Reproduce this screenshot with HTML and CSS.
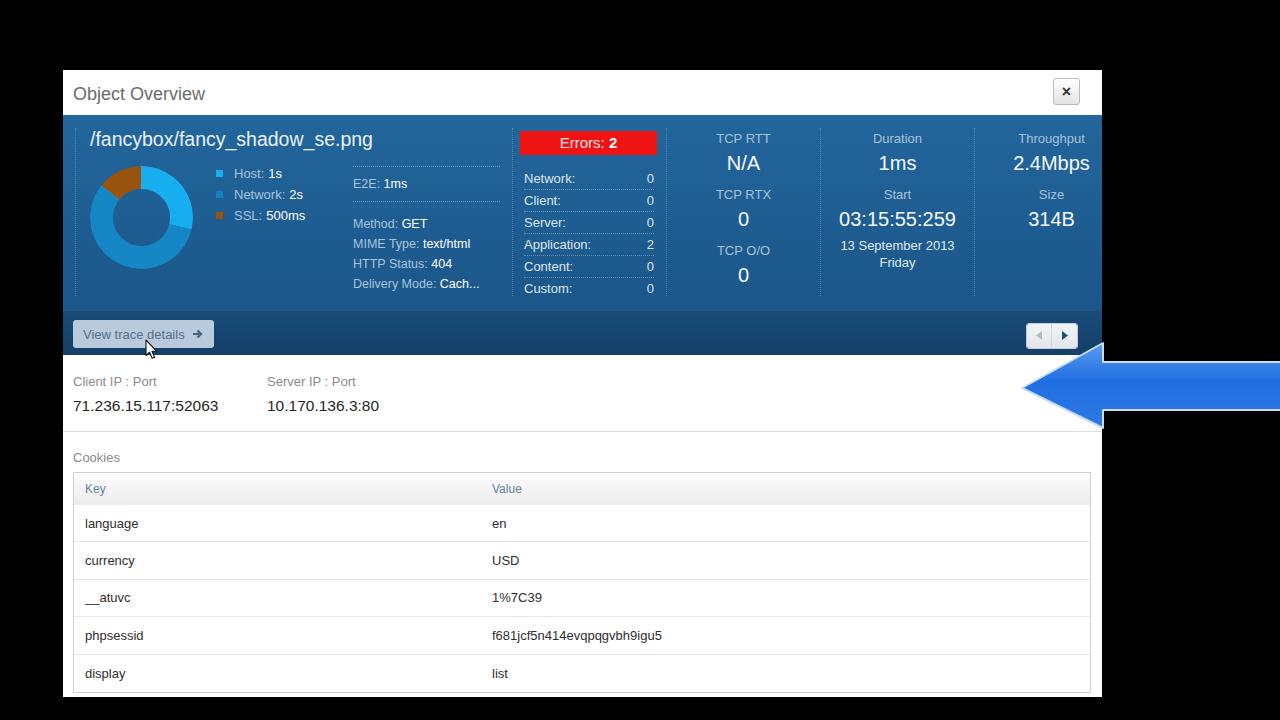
FILE: index.html
```html
<!DOCTYPE html>
<html>
<head>
<meta charset="utf-8">
<title>Object Overview</title>
<link rel="stylesheet" href="styles.css">
</head>
<body>
<div class="dialog">
  <div class="dlg-head">
    <h1 class="dlg-title">Object Overview</h1>
    <button class="close-btn">&#215;</button>
  </div>

  <div class="summary">
    <div class="col col-main">
      <h2 class="obj-title">/fancybox/fancy_shadow_se.png</h2>
      <div class="overview">
        <div class="donut"></div>
        <ul class="legend">
          <li><span class="sq sq-host"></span>Host: <b>1s</b></li>
          <li><span class="sq sq-net"></span>Network: <b>2s</b></li>
          <li><span class="sq sq-ssl"></span>SSL: <b>500ms</b></li>
        </ul>
        <div class="info">
          <div class="e2e">E2E: <b>1ms</b></div>
          <div class="info-list">
            <div>Method: <b>GET</b></div>
            <div>MIME Type: <b>text/html</b></div>
            <div>HTTP Status: <b>404</b></div>
            <div>Delivery Mode: <b>Cach...</b></div>
          </div>
        </div>
      </div>
    </div>

    <div class="col col-errors">
      <div class="err-box">Errors: <b>2</b></div>
      <ul class="err-list">
        <li><span>Network:</span><span>0</span></li>
        <li><span>Client:</span><span>0</span></li>
        <li><span>Server:</span><span>0</span></li>
        <li><span>Application:</span><span>2</span></li>
        <li><span>Content:</span><span>0</span></li>
        <li><span>Custom:</span><span>0</span></li>
      </ul>
    </div>

    <div class="col col-stat">
      <div class="st-label">TCP RTT</div>
      <div class="st-value">N/A</div>
      <div class="st-label gap">TCP RTX</div>
      <div class="st-value">0</div>
      <div class="st-label gap">TCP O/O</div>
      <div class="st-value">0</div>
    </div>

    <div class="col col-stat">
      <div class="st-label">Duration</div>
      <div class="st-value">1ms</div>
      <div class="st-label gap">Start</div>
      <div class="st-value">03:15:55:259</div>
      <div class="st-date">13 September 2013</div>
      <div class="st-date2">Friday</div>
    </div>

    <div class="col col-stat">
      <div class="st-label">Throughput</div>
      <div class="st-value">2.4Mbps</div>
      <div class="st-label gap">Size</div>
      <div class="st-value">314B</div>
    </div>
  </div>

  <div class="summary-bar">
    <button class="trace-btn">View trace details
      <svg class="trace-arrow" width="11" height="10" viewBox="0 0 11 10"><path d="M1 5H9M5.5 1.5L9 5L5.5 8.5" fill="none" stroke="#46627f" stroke-width="2.2"/></svg>
    </button>
    <div class="pager">
      <span class="pg pg-prev"><svg width="6" height="9" viewBox="0 0 6 9"><path d="M6 0V9L0 4.5Z" fill="#b3bcc6"/></svg></span>
      <span class="pg pg-next"><svg width="6" height="9" viewBox="0 0 6 9"><path d="M0 0V9L6 4.5Z" fill="#1e4e7c"/></svg></span>
    </div>
  </div>

  <div class="ips">
    <div class="ip-block">
      <div class="ip-label">Client IP : Port</div>
      <div class="ip-value">71.236.15.117:52063</div>
    </div>
    <div class="ip-block">
      <div class="ip-label">Server IP : Port</div>
      <div class="ip-value">10.170.136.3:80</div>
    </div>
  </div>

  <div class="cookies">
    <div class="ck-label">Cookies</div>
    <div class="ck-table">
      <div class="ck-row ck-head"><span>Key</span><span>Value</span></div>
      <div class="ck-row"><span>language</span><span>en</span></div>
      <div class="ck-row"><span>currency</span><span>USD</span></div>
      <div class="ck-row"><span>__atuvc</span><span>1%7C39</span></div>
      <div class="ck-row"><span>phpsessid</span><span>f681jcf5n414evqpqgvbh9igu5</span></div>
      <div class="ck-row ck-last"><span>display</span><span>list</span></div>
    </div>
  </div>
</div>

<svg class="cursor" width="13" height="21" viewBox="0 0 13 21"><path d="M1 1V16.5L4.6 13.2L7.2 19.3L9.6 18.3L7 12.3H11.8Z" fill="#fff" stroke="#111" stroke-width="1.1" stroke-linejoin="round"/></svg>

<svg class="big-arrow" width="262" height="92" viewBox="0 0 262 92">
  <defs>
    <linearGradient id="ag" x1="0" y1="0" x2="0" y2="1">
      <stop offset="0" stop-color="#5a9cf2"/>
      <stop offset="0.45" stop-color="#1f6ee0"/>
      <stop offset="1" stop-color="#2f7ae6"/>
    </linearGradient>
  </defs>
  <path d="M2 48L83 3V22H262V70H83V88Z" fill="url(#ag)" stroke="#c9dcf5" stroke-width="2" stroke-linejoin="round"/>
</svg>
</body>
</html>
```

FILE: styles.css
```css
* { box-sizing: border-box; }
html, body { margin: 0; padding: 0; }
body {
  background: #000;
  width: 1280px;
  height: 720px;
  overflow: hidden;
  position: relative;
  font-family: "Liberation Sans", Arial, sans-serif;
}
ul { list-style: none; margin: 0; padding: 0; }
b { font-weight: normal; color: #fff; }

.dialog {
  margin: 70px 0 0 63px;
  width: 1039px;
  height: 627px;
  background: #fff;
  overflow: hidden;
}

.dlg-head {
  height: 45px;
  display: flex;
  align-items: center;
  justify-content: space-between;
  padding: 0 22px 0 10px;
}
.dlg-title {
  margin: 0;
  padding-top: 3px;
  font-size: 18px;
  font-weight: normal;
  color: #6b6b6b;
}
.close-btn {
  width: 27px;
  height: 27px;
  padding: 0;
  margin-top: -2px;
  border: 1px solid #bcbcbc;
  border-radius: 3px;
  background: linear-gradient(#ffffff, #e4e4e4);
  font-family: "Liberation Sans", Arial, sans-serif;
  font-size: 16px;
  font-weight: bold;
  line-height: 24px;
  color: #333;
}

/* summary panel */
.summary {
  height: 195px;
  display: grid;
  grid-template-columns: 437px 154px 154px 154px 154px;
  padding: 13px 0 14px 12px;
  background: linear-gradient(#22669c, #1b5689);
  overflow: hidden;
}
.col {
  border-left: 1px dotted rgba(190, 218, 240, 0.3);
  height: 168px;
  color: #a9c4dc;
  font-size: 13px;
}
.col-main { padding-left: 14px; }
.obj-title {
  margin: 0;
  font-size: 19.5px;
  line-height: 22px;
  font-weight: normal;
  color: #e9f1f8;
}
.overview {
  display: flex;
  margin-top: 13px;
}
.donut {
  width: 103px;
  height: 103px;
  margin-top: 3px;
  border-radius: 50%;
  background: conic-gradient(#17aef0 0deg 103deg, #1487c4 103deg 309deg, #9a520f 309deg 360deg);
  -webkit-mask: radial-gradient(circle, transparent 28px, #000 29px);
  mask: radial-gradient(circle, transparent 28px, #000 29px);
  flex: none;
}
.legend {
  margin-left: 23px;
  width: 137px;
  line-height: 21px;
  color: #a9c4dc;
}
.legend li { display: flex; align-items: center; }
.legend b { margin-left: 4px; }
.sq {
  width: 7px;
  height: 7px;
  margin-right: 11px;
  display: inline-block;
}
.sq-host { background: #18aff0; }
.sq-net { background: #1682bd; }
.sq-ssl { background: #9c520f; }
.info {
  width: 147px;
  margin-top: 3px;
  border-top: 1px dotted rgba(200, 225, 245, 0.45);
  font-size: 12.5px;
}
.e2e {
  line-height: 34px;
  border-bottom: 1px dotted rgba(200, 225, 245, 0.45);
}
.info-list {
  margin-top: 12px;
  line-height: 20px;
  white-space: nowrap;
}

/* errors */
.col-errors { padding-left: 7px; }
.err-box {
  width: 137px;
  height: 24px;
  margin-top: 3px;
  background: #f01313;
  color: #ffe5e5;
  text-align: center;
  font-size: 15px;
  line-height: 24px;
}
.err-box b { font-weight: bold; }
.err-list {
  width: 130px;
  margin: 13px 0 0 4px;
  color: #dce7f0;
}
.err-list li {
  display: flex;
  justify-content: space-between;
  line-height: 21px;
  border-bottom: 1px dotted rgba(200, 225, 245, 0.4);
}
.err-list li:last-child { border-bottom: 0; }

/* stat columns */
.col-stat {
  text-align: center;
  padding-top: 2px;
}
.st-label { line-height: 18px; color: #a6c2db; }
.st-label.gap { margin-top: 11px; }
.st-value {
  margin-top: 3px;
  font-size: 20px;
  line-height: 24px;
  color: #f4f8fb;
}
.st-date { margin-top: 6px; line-height: 17px; color: #dfe9f2; }
.st-date2 { line-height: 17px; color: #dfe9f2; }

/* bar */
.summary-bar {
  height: 45px;
  display: flex;
  align-items: center;
  justify-content: space-between;
  padding: 2px 24px 0 10px;
  border-top: 1px solid rgba(255, 255, 255, 0.1);
  background: linear-gradient(#184c78, #143f68);
}
.trace-btn {
  height: 28px;
  width: 141px;
  display: flex;
  align-items: center;
  gap: 7px;
  padding: 0 0 0 10px;
  border: 0;
  border-radius: 3px;
  background: #b8cadc;
  font-family: "Liberation Sans", Arial, sans-serif;
  font-size: 13px;
  color: #566f8b;
}
.pager {
  display: flex;
  height: 26px;
  margin-top: 3px;
  border-radius: 3px;
  overflow: hidden;
  border: 1px solid #c6cdd5;
}
.pg {
  width: 25px;
  display: flex;
  align-items: center;
  justify-content: center;
  background: linear-gradient(#f2f4f6, #e2e7eb);
}
.pg-prev { border-right: 1px solid #d3d9de; }

/* ips */
.ips {
  display: flex;
  padding: 19px 10px 15px;
  border-bottom: 1px solid #dcdcdc;
}
.ip-block { width: 194px; }
.ip-label { font-size: 13px; line-height: 16px; color: #8a8a8a; }
.ip-value { margin-top: 6px; font-size: 15.5px; line-height: 20px; color: #262626; }

/* cookies */
.cookies { padding: 18px 11px 0 10px; }
.ck-label { font-size: 13px; line-height: 16px; color: #8a8a8a; margin-bottom: 6px; }
.ck-table {
  width: 1018px;
  border: 1px solid #d0d0d0;
}
.ck-row {
  display: grid;
  grid-template-columns: 407px 1fr;
  height: 37.4px;
  align-items: center;
  padding-left: 11px;
  border-bottom: 1px solid #e6e6e6;
  font-size: 13px;
  color: #2e2e2e;
}
.ck-row.ck-last { border-bottom: 0; }
.ck-head {
  height: 32px;
  border-bottom: 0;
  background: linear-gradient(#fcfcfc, #ececec);
  font-size: 12px;
  color: #6683a0;
}

/* overlays */
.cursor {
  position: absolute;
  left: 145px;
  top: 339px;
}
.big-arrow {
  position: absolute;
  left: 1020px;
  top: 340px;
}
```
